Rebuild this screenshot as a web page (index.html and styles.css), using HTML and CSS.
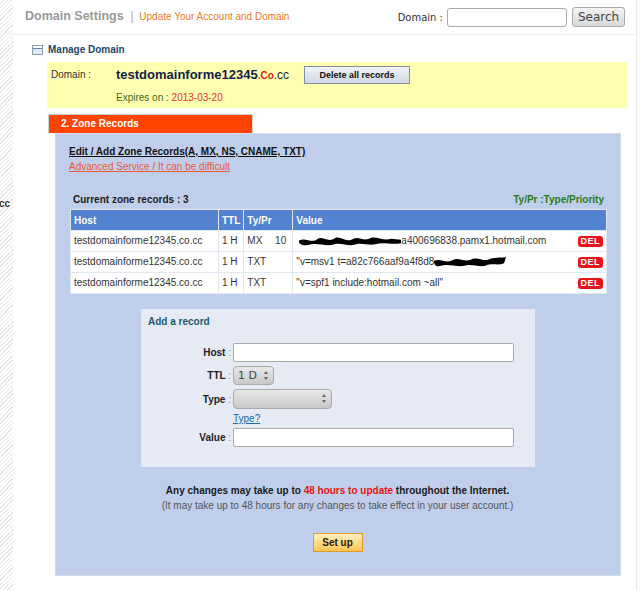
FILE: index.html
```html
<!DOCTYPE html>
<html lang="en">
<head>
    <meta charset="UTF-8">
    <title>Domain Settings</title>
    <link rel="stylesheet" href="styles.css">
</head>
<body>
    <div class="page">
        <div class="side"><span class="side-cut">cc</span></div>
        <div class="main">
            <div class="header">
                <div class="title">
                    <span class="title-main">Domain Settings</span>
                    <span class="title-sep">|</span>
                    <span class="title-sub">Update Your Account and Domain</span>
                </div>
                <form class="search">
                    <label for="q">Domain :</label>
                    <input type="text" id="q">
                    <button type="button">Search</button>
                </form>
            </div>

            <div class="manage">
                <span class="manage-icon"></span>
                <span>Manage Domain</span>
            </div>

            <div class="domain-box">
                <div class="domain-row">
                    <span class="domain-label">Domain :</span>
                    <span class="domain-name">testdomainforme12345<span class="tld-co">.Co</span><span class="tld-cc">.cc</span></span>
                    <button type="button" class="btn-grey">Delete all records</button>
                </div>
                <div class="expires">Expires on : <span>2013-03-20</span></div>
            </div>

            <div class="zone-tab">2. Zone Records</div>
            <div class="zone-panel">
                <a class="zone-edit" href="#">Edit / Add Zone Records(A, MX, NS, CNAME, TXT)</a>
                <a class="zone-warn" href="#">Advanced Service / It can be difficult</a>

                <div class="zone-count">
                    <span>Current zone records : 3</span>
                    <span class="legend">Ty/Pr :Type/Priority</span>
                </div>

                <table class="records">
                    <tr>
                        <th class="c-host">Host</th>
                        <th class="c-ttl">TTL</th>
                        <th class="c-type">Ty/Pr</th>
                        <th>Value</th>
                    </tr>
                    <tr>
                        <td>testdomainforme12345.co.cc</td>
                        <td>1 H</td>
                        <td>MX <span class="prio">10</span></td>
                        <td class="val"><svg class="blob blob-a" width="103" height="10" viewBox="0 0 104 11" preserveAspectRatio="none">
                                <path d="M1 5 C8 1 14 9 20 3 C26 0 30 8 38 2 C44 0 48 8 56 3 C62 0 66 7 74 2 C80 0 86 6 94 3 L104 4 L104 8 C94 10 86 6 78 9 C70 11 64 6 56 10 C48 11 42 6 34 10 C26 11 18 7 10 10 C5 11 0 9 1 5 Z" fill="#000"/>
                            </svg>a400696838.pamx1.hotmail.com
                            <span class="del">DEL</span>
                        </td>
                    </tr>
                    <tr>
                        <td>testdomainforme12345.co.cc</td>
                        <td>1 H</td>
                        <td>TXT</td>
                        <td class="val">
                            "v=msv1 t=a82c766aaf9a4f8d8<svg class="blob blob-b" width="72" height="10" viewBox="0 0 74 11" preserveAspectRatio="none">
                                <path d="M0 4 C8 1 12 8 20 3 C26 0 32 7 40 2 C46 0 52 6 58 2 C64 0 70 1 74 0 L72 7 C66 10 60 6 52 10 C44 11 38 7 30 10 C22 11 14 7 6 10 C2 11 0 9 0 4 Z" fill="#000"/>
                            </svg>
                            <span class="del">DEL</span>
                        </td>
                    </tr>
                    <tr>
                        <td>testdomainforme12345.co.cc</td>
                        <td>1 H</td>
                        <td>TXT</td>
                        <td class="val">
                            "v=spf1 include:hotmail.com ~all"
                            <span class="del">DEL</span>
                        </td>
                    </tr>
                </table>

                <div class="add-box">
                    <div class="add-title">Add a record</div>
                    <div class="add-form">
                        <div class="field">
                            <label>Host <i>:</i></label>
                            <input type="text" class="in-wide">
                        </div>
                        <div class="field">
                            <label>TTL <i>:</i></label>
                            <span class="sel sel-ttl">1 D<span class="arrows"></span></span>
                        </div>
                        <div class="field">
                            <label>Type <i>:</i></label>
                            <span class="sel sel-type"><span class="arrows"></span></span>
                        </div>
                        <div class="field field-help">
                            <label></label>
                            <a href="#">Type?</a>
                        </div>
                        <div class="field">
                            <label>Value <i>:</i></label>
                            <input type="text" class="in-wide">
                        </div>
                    </div>
                </div>

                <div class="notice">
                    <p class="notice-main">Any changes may take up to <span>48 hours to update</span> throughout the Internet.</p>
                    <p class="notice-sub">(It may take up to 48 hours for any changes to take effect in your user account.)</p>
                </div>

                <div class="setup">
                    <button type="button" class="btn-orange">Set up</button>
                </div>
            </div>
        </div>
    </div>
</body>
</html>
```

FILE: styles.css
```css
/* Reset */
body, p, table {
    margin: 0;
    padding: 0;
}

body {
    font-family: "Liberation Sans", Arial, sans-serif;
    font-size: 10px;
    color: #222;
    background: #fff;
}

.page {
    display: flex;
    min-height: 590px;
}

/* Left hatched strip */
.side {
    width: 13px;
    flex: none;
    background: repeating-linear-gradient(135deg, #fff 0, #fff 2px, #e6e6e6 2px, #e6e6e6 3px);
    overflow: hidden;
    padding-top: 198px;
    box-sizing: border-box;
}

.side-cut {
    display: block;
    font-weight: bold;
    font-size: 10px;
    color: #333;
    margin-left: -1px;
}

.main {
    width: 623px;
    border-right: 1px solid #ebebeb;
}

/* Header */
.header {
    display: flex;
    justify-content: space-between;
    align-items: center;
    height: 34px;
    border-bottom: 1px solid #eee;
    padding: 0 11px 0 12px;
}

.title {
    margin-top: -2px;
}

.title-main {
    font-size: 12.5px;
    font-weight: bold;
    color: #999;
}

.title-sep {
    color: #aaa;
    font-size: 12px;
    margin: 0 3px 0 4px;
}

.title-sub {
    font-size: 10px;
    color: #f07828;
}

.search {
    display: flex;
    align-items: center;
    font-family: "DejaVu Sans", sans-serif;
}

.search label {
    font-size: 10px;
    color: #333;
    margin-right: 4px;
}

.search input {
    width: 118px;
    height: 17px;
    border: 1px solid #aaa;
    border-radius: 3px;
    padding: 0;
}

.search button {
    margin-left: 5px;
    height: 20px;
    width: 53px;
    font-family: "DejaVu Sans", sans-serif;
    font-size: 12px;
    color: #444;
    border: 1px solid #aaa;
    border-radius: 3px;
    background: linear-gradient(#f4f4f4, #d8d8d8);
    padding: 0;
}

/* Manage domain */
.manage {
    display: flex;
    align-items: center;
    margin: 9px 0 0 19px;
    font-size: 10px;
    font-weight: bold;
    color: #1d4868;
}

.manage-icon {
    width: 9px;
    height: 8px;
    margin-right: 5px;
    border: 1px solid #8aa0b8;
    background: linear-gradient(#fff 0, #fff 2px, #6a86a8 2px, #6a86a8 3px, #e0e8f0 3px);
}

.domain-box {
    margin: 7px 9px 0 34px;
    height: 46px;
    background: #ffffb0;
    box-sizing: border-box;
    padding: 3px 0 0 4px;
}

.domain-row {
    display: flex;
    align-items: center;
    height: 19px;
}

.domain-label {
    width: 65px;
    color: #333;
    font-size: 10px;
}

.domain-name {
    font-size: 13px;
    font-weight: bold;
    color: #141c46;
    margin-right: 15px;
}

.tld-co {
    color: #e02020;
    font-size: 10px;
}

.tld-cc {
    font-weight: normal;
    font-size: 12px;
}

.btn-grey {
    height: 18px;
    width: 106px;
    font-family: "Liberation Sans", Arial, sans-serif;
    font-size: 9px;
    font-weight: bold;
    color: #111;
    border: 1px solid #8090a8;
    background: linear-gradient(#f2f4f8, #d0d8e4);
    padding: 0;
}

.expires {
    margin: 8px 0 0 65px;
    color: #3d6a1c;
    font-size: 10px;
}

.expires span {
    color: #e8303a;
}

/* Zone records */
.zone-tab {
    margin: 6px 0 0 35px;
    height: 18px;
    line-height: 18px;
    background: #ff4400;
    border: 1px solid #d0d0d0;
    border-bottom: none;
    color: #fff;
    font-weight: bold;
    font-size: 10px;
    padding-left: 12px;
    width: 191px;
    position: relative;
    z-index: 1;
}

.zone-panel {
    margin: 0 15px 0 42px;
    background: #bfcfeb;
    border: 1px solid #d6dcea;
    height: 443px;
    box-sizing: border-box;
    padding: 12px 14px 0 13px;
}

.zone-edit {
    display: block;
    color: #111;
    font-weight: bold;
    font-size: 10px;
}

.zone-warn {
    display: block;
    margin-top: 4px;
    color: #ec5a32;
    font-size: 10px;
}

.zone-count {
    display: flex;
    justify-content: space-between;
    margin: 22px 2px 4px 4px;
    font-weight: bold;
    color: #1a1a1a;
}

.legend {
    color: #2a7a1a;
}

.records {
    width: 537px;
    margin-left: 1px;
    border-collapse: separate;
    border-spacing: 1px;
    background: #e2e6ee;
}

.records th {
    background: #5282d0;
    color: #fff;
    text-align: left;
    height: 20px;
    padding: 0 3px;
    font-size: 10px;
}

.records td {
    background: #fff;
    height: 20px;
    line-height: 12px;
    padding: 0 3px;
    color: #333;
    white-space: nowrap;
}

.c-host { width: 141px; }
.c-ttl { width: 18px; }
.c-type { width: 42px; }

.prio {
    margin-left: 10px;
}

.val {
    position: relative;
}

.blob {
    vertical-align: -2px;
}

.blob-a {
    margin-left: 2px;
}

.del {
    position: absolute;
    right: 3px;
    top: 5px;
    background: #e8141c;
    color: #fff;
    font-weight: bold;
    font-size: 9px;
    line-height: 11px;
    padding: 0 3px;
    border-radius: 3px;
    letter-spacing: 0.5px;
}

/* Add a record */
.add-box {
    margin: 15px 0 0 72px;
    width: 394px;
    height: 158px;
    background: #e6eaf4;
    box-sizing: border-box;
    padding: 7px 7px 0;
}

.add-title {
    font-weight: bold;
    color: #1a5a70;
}

.add-form {
    margin-top: 16px;
}

.field {
    display: flex;
    align-items: center;
    margin-bottom: 4px;
}

.field label {
    width: 83px;
    text-align: right;
    font-weight: bold;
    color: #222;
    margin-right: 2px;
}

.field label i {
    font-style: normal;
    font-weight: normal;
    color: #999;
}

.in-wide {
    width: 281px;
    height: 19px;
    box-sizing: border-box;
    border: 1px solid #aaa;
    border-radius: 2px;
    padding: 0;
}

.sel {
    display: inline-flex;
    align-items: center;
    box-sizing: border-box;
    height: 19px;
    border: 1px solid #aaa;
    border-radius: 4px;
    background: linear-gradient(#e8e8e8, #c8c8c8);
    font-family: "DejaVu Sans", sans-serif;
    font-size: 11px;
    color: #444;
    padding-left: 4px;
    position: relative;
}

.sel-ttl { width: 41px; }
.sel-type { width: 99px; height: 20px; }

.arrows {
    position: absolute;
    right: 5px;
    top: 4px;
    width: 0;
    height: 9px;
    border-left: 2px solid transparent;
    border-right: 2px solid transparent;
}

.arrows::before,
.arrows::after {
    content: "";
    position: absolute;
    left: -2px;
    border-left: 2px solid transparent;
    border-right: 2px solid transparent;
}

.arrows::before {
    top: 0;
    border-bottom: 3px solid #666;
}

.arrows::after {
    bottom: 0;
    border-top: 3px solid #666;
}

.field-help {
    margin: 0 0 4px;
}

.field-help a {
    color: #1a6ab0;
    font-size: 10px;
}

/* Notice */
.notice {
    margin-top: 18px;
    text-align: center;
}

.notice-main {
    font-weight: bold;
    color: #1a1a1a;
}

.notice-main span {
    color: #ee1111;
}

.notice-sub {
    margin-top: 4px;
    color: #555;
}

.setup {
    text-align: center;
    margin-top: 22px;
}

.btn-orange {
    width: 50px;
    height: 19px;
    font-family: "Liberation Sans", Arial, sans-serif;
    font-size: 10px;
    font-weight: bold;
    color: #2a1a00;
    border: 1px solid #e29a2a;
    background: linear-gradient(#fff0c0, #ffc450);
    padding: 0;
}
```
